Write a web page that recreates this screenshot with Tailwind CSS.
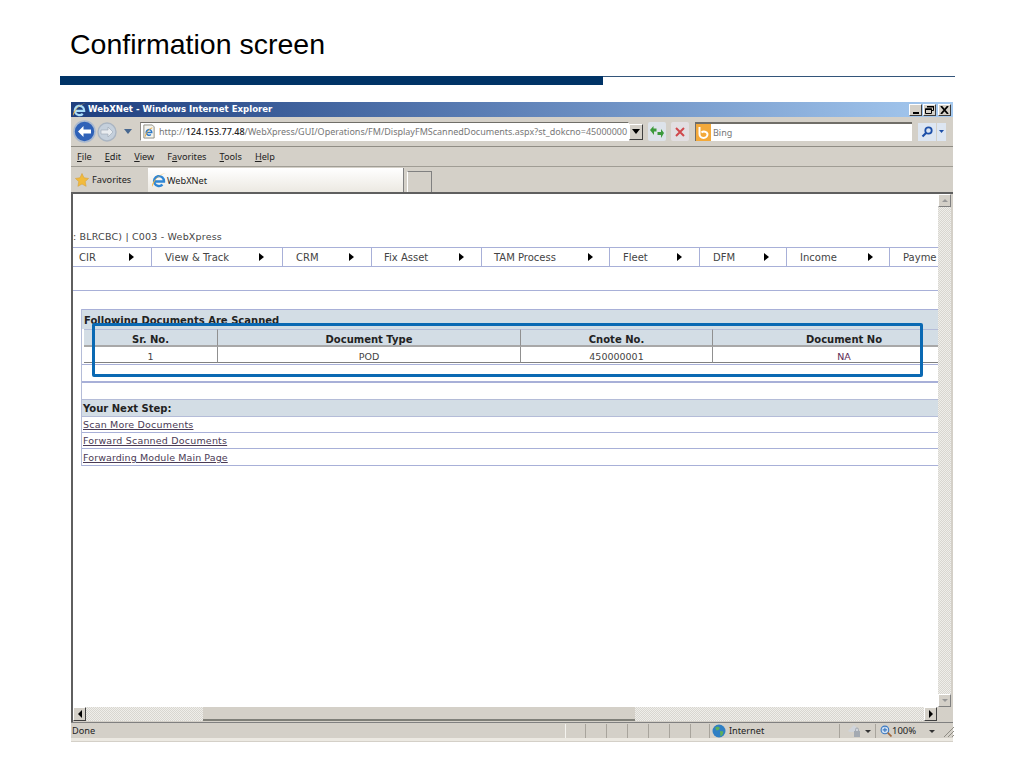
<!DOCTYPE html>
<html><head><meta charset="utf-8"><title>Confirmation screen</title>
<script src="https://cdn.jsdelivr.net/npm/@tailwindcss/browser@4"></script></head>
<body class="bg-white">
<div class="relative w-[1024px] h-[768px] overflow-hidden bg-white font-['Liberation_Sans',sans-serif]">
  <h1 class="ml-[70px] pt-[28px] h-[76px] text-[28.5px] leading-[32px] font-normal text-black">Confirmation screen</h1>
  <div class="ml-[60px] w-[895px] h-[9px] flex items-start">
    <div class="w-[543px] h-[9px] bg-[#003366]"></div>
    <div class="flex-1 h-px bg-[#33557a]"></div>
  </div>
  <div class="relative ml-[71px] mt-[17px] w-[882px] h-[640px] flex flex-col bg-[#d4d0c8] font-['Noto_Sans',sans-serif] text-[#222]">
    <!-- title bar -->
    <div class="h-[15px] flex items-center pl-[1px] pr-[2px] bg-gradient-to-r from-[#1f3f7f] via-[#5f82b8] to-[#a6caf0]">
      <svg class="w-[15px] h-[15px] shrink-0" viewBox="0 0 16 16"><path d="M3.500 9.500h9.500a5 5 0 1 0-1.500 3.200" fill="none" stroke="#a9dcf8" stroke-width="2.400"/><path d="M1 15C0 11 7 2 15 1c-3 1-6 2-9 5-2 2-3 5-5 9z" fill="#f2b544"/></svg>
      <span class="ml-[1px] font-['DejaVu_Sans',sans-serif] font-bold text-[8.6px] leading-none text-white">WebXNet - Windows Internet Explorer</span>
      <div class="ml-auto flex gap-[1px]">
        <div class="w-[13px] h-[12px] bg-[#d4d0c8] border border-t-white border-l-white border-r-[#404040] border-b-[#404040] flex items-end justify-center"><div class="w-[6px] h-[2px] bg-black mb-[1px]"></div></div>
        <div class="w-[13px] h-[12px] bg-[#d4d0c8] border border-t-white border-l-white border-r-[#404040] border-b-[#404040] flex items-center justify-center">
          <svg class="w-[9px] h-[8px]" viewBox="0 0 9 8"><path d="M2.500 .5h6v4h-2M.5 3h6v4.500h-6z" fill="none" stroke="#000"/><path d="M2 0h7v1.500H2zM0 2.500h7V4H0z"/></svg></div>
        <div class="w-[13px] h-[12px] ml-[1px] bg-[#d4d0c8] border border-t-white border-l-white border-r-[#404040] border-b-[#404040] flex items-center justify-center">
          <svg class="w-[9px] h-[8px]" viewBox="0 0 9 8"><path d="M1 0l7 8M8 0L1 8" stroke="#000" stroke-width="1.800"/></svg></div>
      </div>
    </div>
    <!-- address bar -->
    <div class="h-[30px] flex items-center border-b border-[#8f8c84] pl-[1px]">
      <svg class="w-[23px] h-[23px] ml-[1px] shrink-0" viewBox="0 0 23 23"><circle cx="11.500" cy="11.500" r="10.500" fill="#2f62b8" stroke="#a9b9cf" stroke-width="1.600"/><path d="M5 11.500l5.500-5.500v3.500H18v4h-7.500V17z" fill="#fff"/></svg>
      <svg class="w-[20px] h-[20px] ml-[1px] shrink-0" viewBox="0 0 20 20"><circle cx="10" cy="10" r="9" fill="#c5d0dc" stroke="#aab5c2" stroke-width="1.400"/><path d="M16 10l-5-5v3H4v4h7v3z" fill="#e8ecf0" stroke="#9aa6b4" stroke-width=".6"/></svg>
      <svg class="w-[8px] h-[5px] ml-[7px] shrink-0" viewBox="0 0 8 5"><path d="M0 0h8L4 5z" fill="#47678f"/></svg>
      <div class="ml-[8px] w-[489px] h-[19px] flex items-center bg-white border border-t-[#706e68] border-l-[#8f8c84] border-r-white border-b-white overflow-hidden">
        <svg class="w-[14px] h-[15px] ml-[1px] shrink-0" viewBox="0 0 15 15"><path d="M2 .5h9l2 2V14.500H2z" fill="#f4f4ee" stroke="#8a8a80"/><path d="M4.500 8.500h6a3 3 0 1 0-1 2.200" fill="none" stroke="#2b78c8" stroke-width="1.600"/><path d="M3.500 13C4 9 7 5 11 3.500" fill="none" stroke="#e9a93a" stroke-width="1"/></svg>
        <span class="ml-[3px] text-[9px] leading-[14px] whitespace-nowrap text-[#777]">http://<span class="text-[#222] font-medium">124.153.77.48</span>/WebXpress/GUI/Operations/FM/DisplayFMScannedDocuments.aspx?st_dokcno=45000000</span>
      </div>
      <div class="w-[14px] h-[16px] shrink-0 bg-[#d4d0c8] border border-t-white border-l-white border-r-[#404040] border-b-[#404040] flex items-center justify-center"><svg class="w-[8px] h-[5px]" viewBox="0 0 8 5"><path d="M0 0h8L4 5z"/></svg></div>
      <div class="ml-[5px] w-[18px] h-[19px] shrink-0 bg-[#dde3ea] rounded-[2px] flex items-center justify-center">
        <svg class="w-[14px] h-[12px]" viewBox="0 0 14 12"><path d="M0 4l3.500-4v2.500H6.500v3H4V9zM14 7l-3 5V9H7.500V6H11V3z" fill="#3c9a3c"/></svg></div>
      <div class="ml-[5px] w-[18px] h-[19px] shrink-0 bg-[#e2dfe2] rounded-[2px] flex items-center justify-center">
        <svg class="w-[10px] h-[10px]" viewBox="0 0 10 10"><path d="M1 1l8 8M9 1L1 9" stroke="#d0484c" stroke-width="2"/></svg></div>
      <div class="ml-[6px] w-[217px] h-[19px] shrink-0 flex items-center bg-white border-t-2 border-l border-[#706e68]">
        <div class="w-[15px] h-[17px] bg-[#f3a93a] flex items-center justify-center shrink-0"><svg class="w-[13px] h-[13px]" viewBox="0 0 13 13"><path d="M2.500 1v7a4 4 0 0 0 8 0 3.500 3 0 0 0-6-1.500" fill="none" stroke="#fff" stroke-width="2"/></svg></div>
        <span class="ml-[2px] text-[9px] leading-none text-[#777]">Bing</span>
      </div>
      <div class="ml-[6px] w-[18px] h-[18px] shrink-0 bg-[#dde6f2] flex items-center justify-center">
        <svg class="w-[12px] h-[12px]" viewBox="0 0 12 12"><circle cx="7.500" cy="4.500" r="3.200" fill="none" stroke="#1d4fa8" stroke-width="1.800"/><path d="M5 7L1.500 10.500" stroke="#1d4fa8" stroke-width="2.200"/></svg></div>
      <div class="ml-[1px] w-[9px] h-[18px] shrink-0 bg-[#dde6f2] flex items-center justify-center"><svg class="w-[5px] h-[3px]" viewBox="0 0 5 3"><path d="M0 0h5L2.500 3z" fill="#1d4fa8"/></svg></div>
    </div>
    <!-- menu bar -->
    <div class="h-[20px] flex items-center gap-[13px] pl-[6px] border-b border-[#a09d95] text-[9.200px] leading-none text-[#222]">
      <span><u>F</u>ile</span><span><u>E</u>dit</span><span><u>V</u>iew</span><span>F<u>a</u>vorites</span><span><u>T</u>ools</span><span><u>H</u>elp</span>
    </div>
    <!-- favourites bar -->
    <div class="h-[25px] flex items-end text-[9.200px] leading-none text-[#222]">
      <div class="w-[77px] h-[25px] flex items-center pl-[4px] gap-[3px]">
        <svg class="w-[14px] h-[14px] shrink-0" viewBox="0 0 14 14"><path d="M7 .5l2 4.300 4.600.6-3.400 3.200.9 4.700L7 11l-4.100 2.300.9-4.700L.4 5.400 5 4.800z" fill="#f2bb3c" stroke="#d9a23a" stroke-width=".6"/></svg>
        <span>Favorites</span>
      </div>
      <div class="w-[256px] h-[24px] flex items-center pl-[3px] gap-[0px] bg-gradient-to-b from-white to-[#ece9e2] border-r border-[#808080]">
        <svg class="w-[16px] h-[16px] shrink-0" viewBox="0 0 16 16"><path d="M3.500 9.500h9.500a5 5 0 1 0-1.500 3.200" fill="none" stroke="#2f86d4" stroke-width="2.400"/><path d="M1 15C0 11 7 2 15 1c-3 1-6 2-9 5-2 2-3 5-5 9z" fill="#f2b544"/></svg>
        <span class="pt-[2px]">WebXNet</span>
      </div>
      <div class="ml-[3px] w-[25px] h-[21px] border-t border-r border-[#808080] border-l border-l-white"></div>
    </div>
    <!-- viewport -->
    <div class="flex h-[515px] border-t-2 border-l-2 border-[#5f5f5f] bg-white">
      <div class="w-[865px] min-w-0 overflow-hidden font-['DejaVu_Sans',sans-serif] text-[9.500px] leading-none text-[#444]">
        <div class="h-[37px] pt-[38px] whitespace-nowrap tracking-[0.020em]">: BLRCBC) | C003 - WebXpress</div>
        <nav class="mt-[15px] h-[20px] flex border-y border-[#a8b0d8] whitespace-nowrap text-[10px]">
          <div class="w-[79px] shrink-0 flex items-center pl-[6px] border-r border-[#a8b0d8]"><span class="pt-[2px]">CIR</span><span class="ml-auto mr-[17px] w-0 h-0 border-y-[4px] border-y-transparent border-l-[5px] border-l-black"></span></div>
          <div class="w-[131px] shrink-0 flex items-center pl-[13px] border-r border-[#a8b0d8]"><span class="pt-[2px]">View &amp; Track</span><span class="ml-auto mr-[18px] w-0 h-0 border-y-[4px] border-y-transparent border-l-[5px] border-l-black"></span></div>
          <div class="w-[89px] shrink-0 flex items-center pl-[13px] border-r border-[#a8b0d8]"><span class="pt-[2px]">CRM</span><span class="ml-auto mr-[17px] w-0 h-0 border-y-[4px] border-y-transparent border-l-[5px] border-l-black"></span></div>
          <div class="w-[110px] shrink-0 flex items-center pl-[12px] border-r border-[#a8b0d8]"><span class="pt-[2px]">Fix Asset</span><span class="ml-auto mr-[17px] w-0 h-0 border-y-[4px] border-y-transparent border-l-[5px] border-l-black"></span></div>
          <div class="w-[128px] shrink-0 flex items-center pl-[12px] border-r border-[#a8b0d8]"><span class="pt-[2px]">TAM Process</span><span class="ml-auto mr-[16px] w-0 h-0 border-y-[4px] border-y-transparent border-l-[5px] border-l-black"></span></div>
          <div class="w-[90px] shrink-0 flex items-center pl-[13px] border-r border-[#a8b0d8]"><span class="pt-[2px]">Fleet</span><span class="ml-auto mr-[17px] w-0 h-0 border-y-[4px] border-y-transparent border-l-[5px] border-l-black"></span></div>
          <div class="w-[87px] shrink-0 flex items-center pl-[13px] border-r border-[#a8b0d8]"><span class="pt-[2px]">DFM</span><span class="ml-auto mr-[17px] w-0 h-0 border-y-[4px] border-y-transparent border-l-[5px] border-l-black"></span></div>
          <div class="w-[103px] shrink-0 flex items-center pl-[13px] border-r border-[#a8b0d8]"><span class="pt-[2px]">Income</span><span class="ml-auto mr-[16px] w-0 h-0 border-y-[4px] border-y-transparent border-l-[5px] border-l-black"></span></div>
          <div class="flex-1 flex items-center pl-[13px]"><span class="pt-[2px]">Payme</span></div>
        </nav>
        <div class="mt-[23px] h-px bg-[#a8b0d8]"></div>
        <div class="mt-[18px] ml-[8px] border-l border-[#b4bcd8]">
          <div class="h-[20px] flex items-end pl-[2px] bg-[#d3dde5] border-t border-[#a8b0d8] font-bold text-[10px] text-[#222] pb-[3px]">Following Documents Are Scanned</div>
          <div class="ml-[2px] grid grid-cols-[134px_303px_192px_262px] text-center">
            <div class="h-[18px] flex items-end justify-center bg-[#d3dde5] border-t border-[#b4bcd8] border-b-2 border-b-[#a8a8a8] border-r border-r-[#909090] font-bold text-[10px] text-[#222]">Sr. No.</div>
            <div class="h-[18px] flex items-end justify-center bg-[#d3dde5] border-t border-[#b4bcd8] border-b-2 border-b-[#a8a8a8] border-r border-r-[#909090] font-bold text-[10px] text-[#222]">Document Type</div>
            <div class="h-[18px] flex items-end justify-center bg-[#d3dde5] border-t border-[#b4bcd8] border-b-2 border-b-[#a8a8a8] border-r border-r-[#909090] font-bold text-[10px] text-[#222]">Cnote No.</div>
            <div class="h-[18px] flex items-end justify-center bg-[#d3dde5] border-t border-[#b4bcd8] border-b-2 border-b-[#a8a8a8] font-bold text-[10px] text-[#222]">Document No</div>
            <div class="h-[16px] pb-[1px] flex items-end justify-center border-b border-[#808080] border-r border-r-[#909090]">1</div>
            <div class="h-[16px] pb-[1px] flex items-end justify-center border-b border-[#808080] border-r border-r-[#909090]">POD</div>
            <div class="h-[16px] pb-[1px] flex items-end justify-center border-b border-[#808080] border-r border-r-[#909090]">450000001</div>
            <div class="h-[16px] pb-[1px] flex items-end justify-center border-b border-[#808080] text-[#5a2a55]">NA</div>
          </div>
          <div class="h-[1px] mt-[1px] bg-[#a8b0d8]"></div>
          <div class="h-[16px]"></div>
          <div class="h-[2px] border-y border-[#a8b0d8]"></div>
          <div class="h-[16px]"></div>
          <div class="h-[18px] pt-[1px] flex items-center pl-[1px] bg-[#d3dde5] border-y border-[#b4bcd8] font-bold text-[10px] text-[#222]">Your Next Step:</div>
          <a href="#" class="h-[16px] flex items-center pl-[1px] border-b border-[#a8b0d8] underline text-[#4a3a55] tracking-[0.020em]">Scan More Documents</a>
          <a href="#" class="h-[16px] flex items-center pl-[1px] border-b border-[#a8b0d8] underline text-[#4a3a55] tracking-[0.020em]">Forward Scanned Documents</a>
          <a href="#" class="h-[17px] pt-[1px] flex items-center pl-[1px] border-b border-[#a8b0d8] underline text-[#4a3a55] tracking-[0.010em]">Forwarding Module Main Page</a>
        </div>
      </div>
      <!-- vertical scrollbar -->
      <div class="w-[13px] flex flex-col bg-[repeating-conic-gradient(#d8d6d0_0_25%,#efeeea_0_50%)] bg-[length:2px_2px]">
        <div class="h-[13px] bg-[#d4d0c8] border border-t-white border-l-white border-r-[#808080] border-b-[#808080] flex items-center justify-center"><div class="w-0 h-0 border-x-[3px] border-x-transparent border-b-[3px] border-b-[#999]"></div></div>
        <div class="mt-auto h-[13px] bg-[#d4d0c8] border border-t-white border-l-white border-r-[#808080] border-b-[#808080] flex items-center justify-center"><div class="w-0 h-0 border-x-[3px] border-x-transparent border-t-[3px] border-t-[#999]"></div></div>
      </div>
      <div class="w-[2px] bg-[#d4d0c8]"></div>
    </div>
    <!-- horizontal scrollbar -->
    <div class="h-[15px] flex">
      <div class="w-[2px] bg-[#5f5f5f]"></div>
      <div class="w-[13px] h-[14px] bg-[#d4d0c8] border border-t-white border-l-white border-r-[#404040] border-b-[#404040] flex items-center justify-center"><div class="w-0 h-0 border-y-[4px] border-y-transparent border-r-[4px] border-r-black"></div></div>
      <div class="w-[117px] h-[14px] bg-[repeating-conic-gradient(#d8d6d0_0_25%,#efeeea_0_50%)] bg-[length:2px_2px]"></div>
      <div class="w-[432px] h-[14px] bg-[#d4d0c8] border-b-2 border-[#7f7f78]"></div>
      <div class="w-[289px] h-[14px] bg-[repeating-conic-gradient(#d8d6d0_0_25%,#efeeea_0_50%)] bg-[length:2px_2px]"></div>
      <div class="w-[13px] h-[14px] bg-[#d4d0c8] border border-t-white border-l-white border-r-[#404040] border-b-[#404040] flex items-center justify-center"><div class="w-0 h-0 border-y-[4px] border-y-transparent border-l-[4px] border-l-black"></div></div>
    </div>
    <!-- status bar -->
    <div class="h-[19px] flex items-center pt-[1px] border-t border-[#808080] text-[9.200px] leading-none text-[#222] border-b-[3px] border-b-[#ece9e2]">
      <span class="w-[494px] shrink-0 pl-[1px]">Done</span>
      <div class="flex h-[14px] shrink-0">
        <div class="w-[21px] border-l border-[#f4f3ef] border-r border-r-[#a8a49c]"></div>
        <div class="w-[21px] border-r border-[#a8a49c]"></div>
        <div class="w-[21px] border-r border-[#a8a49c]"></div>
        <div class="w-[21px] border-r border-[#a8a49c]"></div>
        <div class="w-[21px] border-r border-[#a8a49c]"></div>
        <div class="w-[21px] border-r border-[#a8a49c]"></div>
        <div class="w-[19px] border-r border-[#a8a49c]"></div>
      </div>
      <div class="w-[130px] h-[14px] shrink-0 flex items-center gap-[3px] pl-[2px] border-r border-[#a8a49c]">
        <svg class="w-[14px] h-[14px] shrink-0" viewBox="0 0 14 14"><circle cx="7" cy="7" r="6.500" fill="#2f7fc4"/><path d="M3 3.500l3-1 2 1.500-1.500 2-2 .5zM8 7l3.500.5-1 3.500-2 1.500z" fill="#5fb05a"/></svg>
        <span>Internet</span>
      </div>
      <div class="w-[30px] h-[14px] ml-[2px] shrink-0 flex items-center gap-[3px] pl-[6px]">
        <svg class="w-[14px] h-[14px] shrink-0" viewBox="0 0 14 14"><path d="M0 7l6-6 4 4v3H2z" fill="#d0d4da"/><rect x="6" y="7" width="6" height="6" fill="#a4aab2"/><path d="M7.500 7V5.500a1.500 1.500 0 0 1 3 0V7" fill="none" stroke="#a4aab2"/></svg>
        <div class="w-0 h-0 border-x-[3px] border-x-transparent border-t-[3px] border-t-[#333]"></div>
      </div>
      <div class="w-[68px] h-[14px] ml-[3px] shrink-0 flex items-center pl-[4px] border-l border-[#a8a49c]">
        <svg class="w-[12px] h-[12px] shrink-0" viewBox="0 0 11 11"><circle cx="4.500" cy="4.500" r="3.500" fill="#cfe0f4" stroke="#3a78c0"/><path d="M2.500 4.500h4M4.500 2.500v4" stroke="#3a78c0"/><path d="M7 7l3.500 3.500" stroke="#a06a40" stroke-width="1.500"/></svg>
        <span class="text-[9.500px]">100%</span>
        <div class="ml-[13px] w-0 h-0 border-x-[3px] border-x-transparent border-t-[3px] border-t-[#333]"></div>
      </div>
      <svg class="ml-auto w-[11px] h-[11px] shrink-0" viewBox="0 0 11 11"><path d="M11 1L1 11M11 5L5 11M11 9L9 11" stroke="#8f8c84" stroke-width="1"/></svg>
    </div>
    <!-- highlight overlay -->
    <div class="absolute left-[21px] top-[221px] w-[831px] h-[54px] border-[3px] border-[#0a69b3] rounded-[2px]"></div>
  </div>
</div>
</body></html>
